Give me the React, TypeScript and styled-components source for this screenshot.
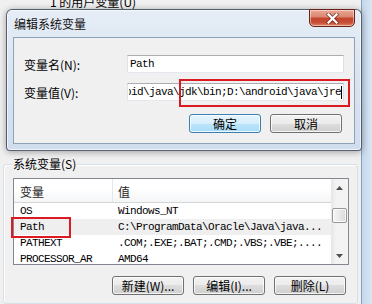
import React from 'react';
import styled, { createGlobalStyle } from 'styled-components';

const CJK = `"Noto Sans CJK SC", "Noto Sans", sans-serif`;
const MONO = `"Liberation Mono", "DejaVu Sans Mono", monospace`;

const GlobalStyle = createGlobalStyle`
  *, *::before, *::after { box-sizing: border-box; }
  html, body { margin: 0; padding: 0; }
  body {
    background: #f0f0f0;
    font-family: ${CJK};
    font-size: 12px;
    color: #000;
  }
`;

const Screen = styled.div`
  position: relative;
  width: 372px;
  height: 304px;
  overflow: hidden;
  display: flex;
  background: #f0f0f0;
`;

/* ---- window behind the dialog ---- */

const BackWindow = styled.div`
  flex: 0 0 362px;
  display: flex;
  flex-direction: column;
  border-right: 1px solid #8b9fb7;
`;

const WindowEdge = styled.div`
  flex: 1;
  background: linear-gradient(90deg, #c4d7ec, #d9e6f4);
`;

const UserVarsArea = styled.div`
  height: 164px;
  padding-left: 50px;
`;

const UserVarsCaption = styled.div`
  margin-top: -4px;
  line-height: 12px;
  font-size: 12px;
  white-space: nowrap;
`;

const GroupBox = styled.div`
  margin-left: 3px;
  width: 355px;
  flex: 1;
  border: 1px solid #d5dfe5;
  border-radius: 3px;
  box-shadow: inset 1px 1px 0 #fff;
  padding: 0 8px 0 9px;
`;

const GroupLegend = styled.div`
  width: fit-content;
  margin: -8px 0 0 -1px;
  padding: 0 1px;
  height: 13px;
  line-height: 13px;
  background: #f0f0f0;
  color: #000;
`;

const ListView = styled.div`
  margin-top: 8px;
  height: 87px;
  border: 1px solid #828790;
  background: #fff;
  display: flex;
  overflow: hidden;
`;

const ListBody = styled.div`
  flex: 1;
  display: flex;
  flex-direction: column;
  overflow: hidden;
`;

const HeaderRow = styled.div`
  height: 24px;
  flex: 0 0 24px;
  display: flex;
  background: linear-gradient(#ffffff 0%, #ffffff 45%, #f4f5f7 100%);
  border-bottom: 1px solid #d5d5d5;
`;

const HeaderCell = styled.div<{ $w?: number }>`
  ${(p) => (p.$w ? `width: ${p.$w}px; border-right: 1px solid #e3e8ee;` : 'flex: 1;')}
  padding-left: ${(p) => (p.$w ? 6 : 5)}px;
  display: flex;
  align-items: center;
  padding-top: 2px;
  color: #1e1e1e;
  font-size: 12px;
`;

const Row = styled.div<{ $selected?: boolean }>`
  height: 16px;
  flex: 0 0 16px;
  display: flex;
  align-items: center;
  background: ${(p) => (p.$selected ? '#efefef' : '#fff')};
  font-family: ${MONO};
  font-size: 11px;
  letter-spacing: -0.6px;
  white-space: nowrap;
`;

const Cell = styled.div<{ $w?: number }>`
  ${(p) => (p.$w ? `width: ${p.$w}px;` : 'flex: 1;')}
  padding-left: ${(p) => (p.$w ? 6 : 5)}px;
  overflow: hidden;
`;

const ScrollBar = styled.div`
  width: 17px;
  flex: 0 0 17px;
  display: flex;
  flex-direction: column;
  background: linear-gradient(90deg, #e6e6e6 0%, #f3f3f3 30%, #f3f3f3 100%);
`;

const ScrollButton = styled.div`
  height: 17px;
  flex: 0 0 17px;
  display: flex;
  align-items: center;
  justify-content: center;
`;

const ScrollThumb = styled.div`
  margin: 12px 1px 0 1px;
  height: 15px;
  border: 1px solid #979797;
  border-radius: 2px;
  background: linear-gradient(90deg, #f6f6f6 0%, #e9e9e9 50%, #dadada 100%);
  box-shadow: inset 0 0 0 1px rgba(255, 255, 255, 0.8);
`;

const ScrollTrack = styled.div`
  flex: 1;
`;

const ButtonRow = styled.div<{ $top: number; $right: number }>`
  display: flex;
  justify-content: flex-end;
  gap: 9px;
  margin-top: ${(p) => p.$top}px;
  padding-right: ${(p) => p.$right}px;
`;

const Button = styled.div<{ $default?: boolean }>`
  width: 72px;
  height: 19px;
  display: flex;
  align-items: center;
  justify-content: center;
  font-size: 12px;
  color: #000;
  border: 1px solid ${(p) => (p.$default ? '#3c7fb1' : '#707070')};
  border-radius: 3px;
  background: ${(p) =>
    p.$default
      ? 'linear-gradient(#e5f4fc 0%, #d6eefb 50%, #bde5fb 50%, #a9dbf6 100%)'
      : 'linear-gradient(#f2f2f2 0%, #ebebeb 50%, #dddddd 50%, #cfcfcf 100%)'};
  box-shadow: inset 0 0 0 1px rgba(255, 255, 255, 0.75);
`;

/* ---- the dialog ---- */

const Dialog = styled.div`
  position: absolute;
  left: 6px;
  top: 9px;
  width: 356px;
  height: 142px;
  border: 1px solid rgba(38, 50, 68, 0.75);
  border-radius: 6px 6px 4px 4px;
  background: linear-gradient(180deg, #e6edf6 0%, #dbe5f2 40%, #d0ddee 100%);
  box-shadow: 0 1px 7px rgba(0, 0, 0, 0.35), inset 0 0 0 1px rgba(255, 255, 255, 0.65);
  display: flex;
  flex-direction: column;
  padding: 0 6px 6px 6px;
`;

const TitleBar = styled.div`
  height: 27px;
  flex: 0 0 27px;
  display: flex;
  align-items: center;
  padding: 0 0 1px 1px;
  font-size: 12px;
  color: #111;
`;

const CloseButton = styled.div`
  position: absolute;
  top: -1px;
  right: 6px;
  width: 46px;
  height: 18px;
  border: 1px solid #6a2216;
  border-radius: 0 0 5px 5px;
  background: linear-gradient(#eaa897 0%, #dc8770 42%, #c4452d 52%, #c84f38 80%, #e08a6c 100%);
  box-shadow: inset 0 0 0 1px rgba(255, 255, 255, 0.45);
  display: flex;
  align-items: center;
  justify-content: center;
`;

const Client = styled.div`
  flex: 1;
  border: 1px solid #8ea3bb;
  background: #f0f0f0;
  padding: 17px 10px 0 10px;
  display: flex;
  flex-direction: column;
`;

const FieldRow = styled.div<{ $top?: number }>`
  height: 18px;
  display: flex;
  align-items: center;
  margin-top: ${(p) => p.$top ?? 0}px;
`;

const FieldLabel = styled.div`
  width: 103px;
  font-size: 12px;
  color: #000;
`;

const TextField = styled.div<{ $end?: boolean }>`
  width: 217px;
  height: 18px;
  border: 1px solid;
  border-color: #abadb3 #dbdfe6 #e3e9ef #e2e3ea;
  background: #fff;
  display: flex;
  align-items: center;
  padding: 0 ${(p) => (p.$end ? 1 : 2)}px 0 ${(p) => (p.$end ? 1 : 2)}px;
  overflow: hidden;
  white-space: nowrap;
  font-family: ${MONO};
  font-size: 11px;
  letter-spacing: -0.6px;
`;

const ScrolledText = styled.div`
  flex: 1;
  display: flex;
  justify-content: flex-end;
  align-items: center;
  overflow: hidden;
`;

const Caret = styled.span`
  display: inline-block;
  flex: 0 0 1px;
  width: 1px;
  height: 13px;
  background: #000;
`;

const Annotation = styled.div<{ $x: number; $y: number; $w: number; $h: number }>`
  position: absolute;
  left: ${(p) => p.$x}px;
  top: ${(p) => p.$y}px;
  width: ${(p) => p.$w}px;
  height: ${(p) => p.$h}px;
  border: 2px solid #dc1a22;
`;

const ArrowUp = () => (
  <svg width="7" height="4" viewBox="0 0 7 4">
    <path d="M0 4 L3.5 0 L7 4 Z" fill="#4f4f4f" />
  </svg>
);

const ArrowDown = () => (
  <svg width="7" height="4" viewBox="0 0 7 4">
    <path d="M0 0 L3.5 4 L7 0 Z" fill="#4f4f4f" />
  </svg>
);

const CloseGlyph = () => (
  <svg width="13" height="11" viewBox="0 0 13 11">
    <path d="M2.5 1.5 L10.5 9.5 M10.5 1.5 L2.5 9.5" stroke="#4a1a12" strokeWidth="4" strokeLinecap="square" opacity="0.55" />
    <path d="M2.5 1.5 L10.5 9.5 M10.5 1.5 L2.5 9.5" stroke="#ffffff" strokeWidth="2.2" strokeLinecap="square" />
  </svg>
);

const rows = [
  { name: 'OS', value: 'Windows_NT' },
  { name: 'Path', value: 'C:\\ProgramData\\Oracle\\Java\\java...', selected: true },
  { name: 'PATHEXT', value: '.COM;.EXE;.BAT;.CMD;.VBS;.VBE;....' },
  { name: 'PROCESSOR_AR', value: 'AMD64' },
];

const App = (): React.ReactElement => {
  return (
    <React.Fragment>
      <GlobalStyle />
      <Screen>
        <BackWindow>
          <UserVarsArea>
            <UserVarsCaption>1 的用户变量(U)</UserVarsCaption>
          </UserVarsArea>
          <GroupBox>
            <GroupLegend>系统变量(S)</GroupLegend>
            <ListView>
              <ListBody>
                <HeaderRow>
                  <HeaderCell $w={99}>变量</HeaderCell>
                  <HeaderCell>值</HeaderCell>
                </HeaderRow>
                {rows.map((r) => (
                  <Row key={r.name} $selected={r.selected}>
                    <Cell $w={99}>{r.name}</Cell>
                    <Cell>{r.value}</Cell>
                  </Row>
                ))}
              </ListBody>
              <ScrollBar>
                <ScrollButton>
                  <ArrowUp />
                </ScrollButton>
                <ScrollThumb />
                <ScrollTrack />
                <ScrollButton>
                  <ArrowDown />
                </ScrollButton>
              </ScrollBar>
            </ListView>
            <ButtonRow $top={11} $right={3}>
              <Button>新建(W)...</Button>
              <Button>编辑(I)...</Button>
              <Button>删除(L)</Button>
            </ButtonRow>
          </GroupBox>
        </BackWindow>
        <WindowEdge />

        <Dialog>
          <TitleBar>编辑系统变量</TitleBar>
          <CloseButton>
            <CloseGlyph />
          </CloseButton>
          <Client>
            <FieldRow>
              <FieldLabel>变量名(N):</FieldLabel>
              <TextField>Path</TextField>
            </FieldRow>
            <FieldRow $top={10}>
              <FieldLabel>变量值(V):</FieldLabel>
              <TextField $end>
                <ScrolledText>
                  <span>D:\android\java\jdk\bin;D:\android\java\jre</span>
                </ScrolledText>
                <Caret />
              </TextField>
            </FieldRow>
            <ButtonRow $top={13} $right={2}>
              <Button $default>确定</Button>
              <Button>取消</Button>
            </ButtonRow>
          </Client>
        </Dialog>

        <Annotation $x={179} $y={79} $w={171} $h={28} />
        <Annotation $x={11} $y={217} $w={60} $h={21} />
      </Screen>
    </React.Fragment>
  );
};

export default App;
